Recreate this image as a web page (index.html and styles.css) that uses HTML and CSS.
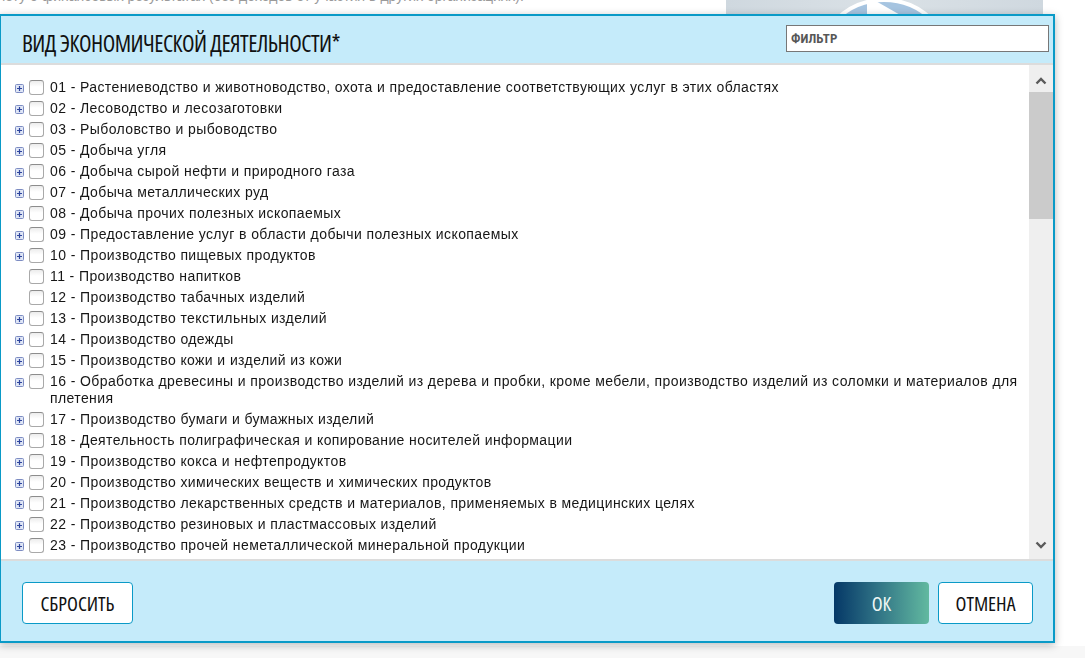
FILE: index.html
```html
<!DOCTYPE html>
<html lang="ru">
<head>
<meta charset="utf-8">
<title>Вид экономической деятельности</title>
<link rel="stylesheet" href="styles.css">
</head>
<body>
<svg class="defs" width="0" height="0" aria-hidden="true">
  <symbol id="plus" viewBox="0 0 9 9">
    <rect x="0.5" y="0.5" width="8" height="8" rx="1" fill="#dfe6f6" stroke="#7d8cc2"/>
    <path d="M2 4.5h5M4.5 2v5" stroke="#2d449c" stroke-width="1.2"/>
  </symbol>
</svg>

<div class="page">
  <div class="page-top">
    <p class="page-note">отчету о финансовых результатах (без доходов от участия в других организациях).</p>
    <div class="video">
      <svg width="317" height="190" viewBox="0 0 317 190">
        <circle cx="158" cy="68" r="68" fill="#a6c4e0" stroke="#ffffff" stroke-width="4"/>
        <path d="M141 -4 L218 40 L141 84 Z" fill="#ffffff"/>
      </svg>
    </div>
  </div>
  <div class="page-bottom"></div>
</div>

<div class="modal">
  <section class="dialog">
    <header class="dialog-head">
      <h2 class="dialog-title">ВИД ЭКОНОМИЧЕСКОЙ ДЕЯТЕЛЬНОСТИ*</h2>
      <input class="filter" type="text" placeholder="ФИЛЬТР">
    </header>

    <div class="dialog-body">
      <ul class="tree">
        <li class="tree-row"><svg class="expander"><use href="#plus"/></svg><span class="check"></span><span class="label">01 - Растениеводство и животноводство, охота и предоставление соответствующих услуг в этих областях</span></li>
        <li class="tree-row"><svg class="expander"><use href="#plus"/></svg><span class="check"></span><span class="label">02 - Лесоводство и лесозаготовки</span></li>
        <li class="tree-row"><svg class="expander"><use href="#plus"/></svg><span class="check"></span><span class="label">03 - Рыболовство и рыбоводство</span></li>
        <li class="tree-row"><svg class="expander"><use href="#plus"/></svg><span class="check"></span><span class="label">05 - Добыча угля</span></li>
        <li class="tree-row"><svg class="expander"><use href="#plus"/></svg><span class="check"></span><span class="label">06 - Добыча сырой нефти и природного газа</span></li>
        <li class="tree-row"><svg class="expander"><use href="#plus"/></svg><span class="check"></span><span class="label">07 - Добыча металлических руд</span></li>
        <li class="tree-row"><svg class="expander"><use href="#plus"/></svg><span class="check"></span><span class="label">08 - Добыча прочих полезных ископаемых</span></li>
        <li class="tree-row"><svg class="expander"><use href="#plus"/></svg><span class="check"></span><span class="label">09 - Предоставление услуг в области добычи полезных ископаемых</span></li>
        <li class="tree-row"><svg class="expander"><use href="#plus"/></svg><span class="check"></span><span class="label">10 - Производство пищевых продуктов</span></li>
        <li class="tree-row"><span class="expander"></span><span class="check"></span><span class="label">11 - Производство напитков</span></li>
        <li class="tree-row"><span class="expander"></span><span class="check"></span><span class="label">12 - Производство табачных изделий</span></li>
        <li class="tree-row"><svg class="expander"><use href="#plus"/></svg><span class="check"></span><span class="label">13 - Производство текстильных изделий</span></li>
        <li class="tree-row"><svg class="expander"><use href="#plus"/></svg><span class="check"></span><span class="label">14 - Производство одежды</span></li>
        <li class="tree-row"><svg class="expander"><use href="#plus"/></svg><span class="check"></span><span class="label">15 - Производство кожи и изделий из кожи</span></li>
        <li class="tree-row"><svg class="expander"><use href="#plus"/></svg><span class="check"></span><span class="label">16 - Обработка древесины и производство изделий из дерева и пробки, кроме мебели, производство изделий из соломки и материалов для плетения</span></li>
        <li class="tree-row"><svg class="expander"><use href="#plus"/></svg><span class="check"></span><span class="label">17 - Производство бумаги и бумажных изделий</span></li>
        <li class="tree-row"><svg class="expander"><use href="#plus"/></svg><span class="check"></span><span class="label">18 - Деятельность полиграфическая и копирование носителей информации</span></li>
        <li class="tree-row"><svg class="expander"><use href="#plus"/></svg><span class="check"></span><span class="label">19 - Производство кокса и нефтепродуктов</span></li>
        <li class="tree-row"><svg class="expander"><use href="#plus"/></svg><span class="check"></span><span class="label">20 - Производство химических веществ и химических продуктов</span></li>
        <li class="tree-row"><svg class="expander"><use href="#plus"/></svg><span class="check"></span><span class="label">21 - Производство лекарственных средств и материалов, применяемых в медицинских целях</span></li>
        <li class="tree-row"><svg class="expander"><use href="#plus"/></svg><span class="check"></span><span class="label">22 - Производство резиновых и пластмассовых изделий</span></li>
        <li class="tree-row"><svg class="expander"><use href="#plus"/></svg><span class="check"></span><span class="label">23 - Производство прочей неметаллической минеральной продукции</span></li>
        <li class="tree-row"><svg class="expander"><use href="#plus"/></svg><span class="check"></span><span class="label">24 - Производство металлургическое</span></li>
      </ul>

      <div class="scrollbar">
        <div class="scroll-btn scroll-up">
          <svg width="12" height="9" viewBox="0 0 12 9"><path d="M1.5 7.5 L6 3 L10.5 7.5" fill="none" stroke="#5a5a5a" stroke-width="2.4"/></svg>
        </div>
        <div class="scroll-thumb"></div>
        <div class="scroll-track"></div>
        <div class="scroll-btn scroll-down">
          <svg width="12" height="9" viewBox="0 0 12 9"><path d="M1.5 1.5 L6 6 L10.5 1.5" fill="none" stroke="#5a5a5a" stroke-width="2.4"/></svg>
        </div>
      </div>
    </div>

    <footer class="dialog-foot">
      <button class="btn btn-reset" type="button">СБРОСИТЬ</button>
      <div class="foot-actions">
        <button class="btn btn-ok" type="button">ОК</button>
        <button class="btn btn-cancel" type="button">ОТМЕНА</button>
      </div>
    </footer>
  </section>
</div>
</body>
</html>
```

FILE: styles.css
```css
* {
  box-sizing: border-box;
}

html,
body {
  margin: 0;
  height: 100%;
}

body {
  background: #ffffff;
  font-family: "Liberation Sans", Arial, sans-serif;
  font-size: 14px;
  color: #161616;
  overflow: hidden;
}

.defs {
  position: absolute;
}

/* Page behind the modal */
.page {
  height: 100%;
  display: flex;
  flex-direction: column;
}

.page-top {
  flex: 1;
  display: flex;
  justify-content: space-between;
  align-items: flex-start;
  padding-right: 42px;
}

.page-note {
  margin: -12px 0 0 -16px;
  font-size: 14px;
  line-height: 17px;
  color: #9a9a9a;
  white-space: nowrap;
}

.video {
  width: 317px;
  height: 190px;
  background: linear-gradient(90deg, #cfd8df 0%, #dae1e6 50%, #cfd8df 100%);
  overflow: hidden;
}

.video svg {
  display: block;
}

.page-bottom {
  height: 12px;
  background: #f7f7f7;
}

/* Modal dialog */
.modal {
  position: fixed;
  inset: 0;
}

.dialog {
  position: absolute;
  left: -1px;
  top: 14px;
  width: 1056px;
  height: 629px;
  display: flex;
  flex-direction: column;
  border: 2px solid #0a9ac7;
  background: #ffffff;
  box-shadow: 0 2px 8px rgba(0, 0, 0, 0.28);
}

.dialog-head {
  height: 49px;
  flex: none;
  display: flex;
  align-items: center;
  justify-content: space-between;
  padding: 0 4px 0 21px;
  background: #c5ebfa;
  border-bottom: 2px solid #dcdcdc;
}

.dialog-title {
  margin: 0;
  padding-top: 6px;
  font-family: "Open Sans", sans-serif;
  font-stretch: 75%;
  font-size: 23px;
  font-weight: 500;
  letter-spacing: -0.5px;
  color: #111111;
}

.filter {
  width: 263px;
  height: 27px;
  margin-top: -2px;
  padding: 0 4px;
  border: 1px solid #777777;
  border-radius: 0;
  background: #ffffff;
  font-family: "Roboto", sans-serif;
  font-stretch: 75%;
  font-size: 13px;
  font-weight: 700;
  color: #333333;
  outline: none;
}

.filter::placeholder {
  color: #575757;
}

.dialog-body {
  flex: 1;
  min-height: 0;
  display: flex;
}

/* Tree list */
.tree {
  flex: 1;
  min-width: 0;
  margin: 0;
  padding: 12px 4px 0 14px;
  list-style: none;
  overflow: hidden;
}

.tree-row {
  display: flex;
  align-items: flex-start;
  padding: 2px 0;
  line-height: 17px;
  letter-spacing: 0.4px;
}

.expander {
  flex: none;
  width: 9px;
  height: 9px;
  margin: 5px 5px 0 0;
}

.check {
  flex: none;
  width: 15px;
  height: 15px;
  margin: 1px 6px 0 0;
  border: 1px solid #a9a9a9;
  border-top-color: #8c8c8c;
  border-radius: 3px;
  background: linear-gradient(#ececec, #ffffff 45%);
}

.label {
  flex: 1;
  min-width: 0;
}

/* Scrollbar */
.scrollbar {
  flex: none;
  width: 24px;
  display: flex;
  flex-direction: column;
  background: #efefef;
}

.scroll-btn {
  height: 27px;
  display: flex;
  justify-content: center;
  align-items: center;
}

.scroll-up {
  padding-top: 4px;
}

.scroll-down {
  height: 26px;
  padding-bottom: 1px;
}

.scroll-btn svg {
  display: block;
}

.scroll-thumb {
  height: 127px;
  background: #cbcbcb;
}

.scroll-track {
  flex: 1;
}

/* Footer */
.dialog-foot {
  height: 82px;
  flex: none;
  display: flex;
  justify-content: space-between;
  align-items: flex-start;
  padding: 21px 20px 0 21px;
  background: #c5ebfa;
  border-top: 2px solid #dcdcdc;
}

.foot-actions {
  display: flex;
  gap: 9px;
}

.btn {
  height: 42px;
  padding: 0;
  border: 1px solid #0a9ac7;
  border-radius: 4px;
  background: #ffffff;
  font-family: "Open Sans", sans-serif;
  font-stretch: 75%;
  font-size: 20px;
  font-weight: 500;
  color: #111111;
  cursor: pointer;
}

.btn-reset {
  width: 111px;
}

.btn-ok {
  width: 95px;
  border: none;
  background: linear-gradient(90deg, #053867 0%, #2f7285 45%, #62b9a0 100%);
  color: #eef7f4;
}

.btn-cancel {
  width: 95px;
}
```
